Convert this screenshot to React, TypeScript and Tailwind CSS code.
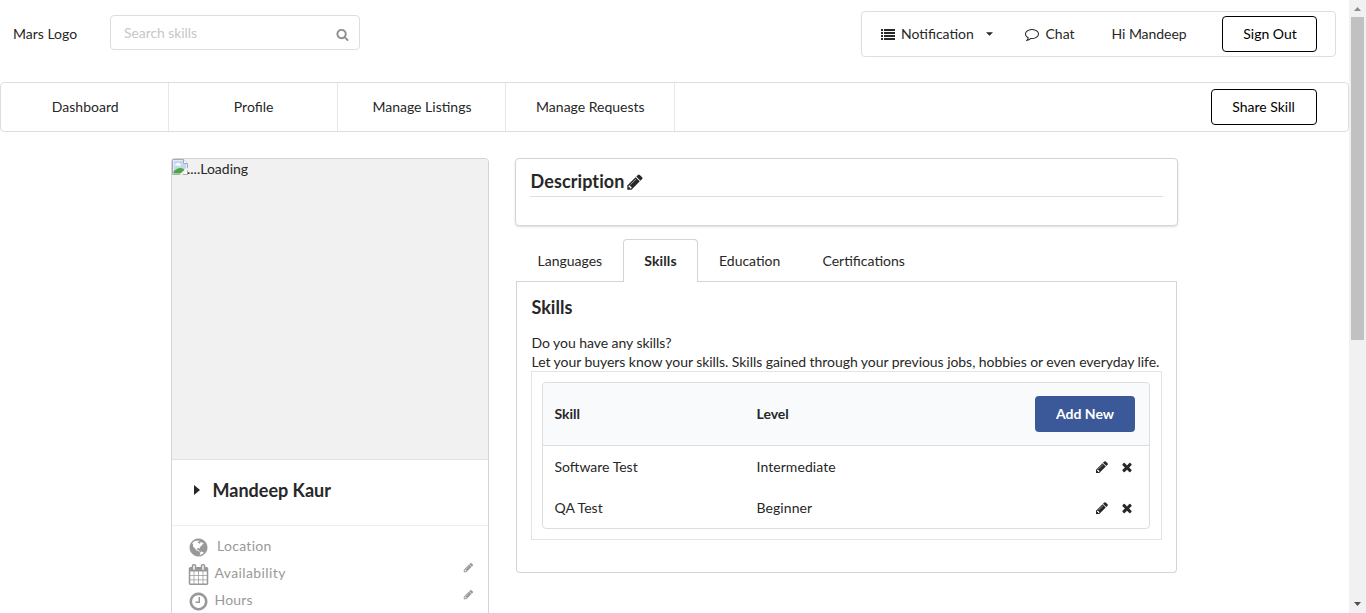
import React from "react";

const PATHS = {
  pencil:
    "M491 1536l91-91-235-235-91 91v107h128v128h107zm523-928q0-22-22-22-10 0-17 7l-542 542q-7 7-7 17 0 22 22 22 10 0 17-7l542-542q7-7 7-17zm-54-192l416 416-832 832h-416v-416zm683 96q0 53-37 90l-166 166-416-416 166-165q36-38 90-38 53 0 91 38l235 234q37 39 37 91z",
  list: "M32 256h192q32 0 32 32v192q0 32-32 32h-192q-32 0-32-32v-192q0-32 32-32zm384 0h1344q32 0 32 32v192q0 32-32 32h-1344q-32 0-32-32v-192q0-32 32-32zM32 640h192q32 0 32 32v192q0 32-32 32h-192q-32 0-32-32v-192q0-32 32-32zm384 0h1344q32 0 32 32v192q0 32-32 32h-1344q-32 0-32-32v-192q0-32 32-32zM32 1024h192q32 0 32 32v192q0 32-32 32h-192q-32 0-32-32v-192q0-32 32-32zm384 0h1344q32 0 32 32v192q0 32-32 32h-1344q-32 0-32-32v-192q0-32 32-32zM32 1408h192q32 0 32 32v192q0 32-32 32h-192q-32 0-32-32v-192q0-32 32-32zm384 0h1344q32 0 32 32v192q0 32-32 32h-1344q-32 0-32-32v-192q0-32 32-32z",
  comment:
    "M896 384q-204 0-381.5 69.5t-282 187.5-104.5 255q0 112 71.5 213.5t201.5 175.5l87 50-27 96q-24 91-70 172 152-63 275-171l43-38 57 6q69 8 130 8 204 0 381.5-69.5t282-187.5 104.5-255-104.5-255-282-187.5-381.5-69.5zm896 512q0 174-120 321.5t-326 233-450 85.5q-70 0-145-8-198 175-460 242-49 14-114 22h-5q-15 0-27-10.5t-16-27.5v-1q-3-4-.5-12t2-10 4.500-9.500l6-9 7-8.500 8-9q7-8 31-34.500t34.500-38 31-39.500 32.500-51 27-59 26-76q-157-89-247.500-220t-90.500-281q0-174 120-321.500t326-233 450-85.500 450 85.500 326 233 120 321.500z",
  search:
    "M1216 832q0-185-131.5-316.5t-316.5-131.5-316.5 131.5-131.5 316.5 131.5 316.5 316.5 131.5 316.5-131.5 131.5-316.5zm512 832q0 52-38 90t-90 38q-54 0-90-38l-343-342q-179 124-399 124-143 0-273.5-55.5t-225-150-150-225-55.5-273.5 55.5-273.5 150-225 225-150 273.5-55.5 273.5 55.5 225 150 150 225 55.5 273.5q0 220-124 399l343 343q37 37 37 90z",
  times:
    "M1490 1322q0 40-28 68l-136 136q-28 28-68 28t-68-28l-294-294-294 294q-28 28-68 28t-68-28l-136-136q-28-28-28-68t28-68l294-294-294-294q-28-28-28-68t28-68l136-136q28-28 68-28t68 28l294 294 294-294q28-28 68-28t68 28l136 136q28 28 28 68t-28 68l-294 294 294 294q28 28 28 68z",
  clock:
    "M1024 544v448q0 14-9 23t-23 9h-320q-14 0-23-9t-9-23v-64q0-14 9-23t23-9h224v-352q0-14 9-23t23-9h64q14 0 23 9t9 23zm416 352q0-148-73-273t-198-198-273-73-273 73-198 198-73 273 73 273 198 198 273 73 273-73 198-198 73-273zm224 0q0 209-103 385.5t-279.5 279.5-385.5 103-385.5-103-279.5-279.5-103-385.5 103-385.5 279.5-279.5 385.5-103 385.5 103 279.5 279.5 103 385.5z",
  calendar:
    "M192 1664h288v-288h-288v288zm352 0h320v-288h-320v288zm-352-352h288v-320h-288v320zm352 0h320v-320h-320v320zm-352-384h288v-288h-288v288zm736 736h320v-288h-320v288zm-384-736h320v-288h-320v288zm768 736h288v-288h-288v288zm-384-352h320v-320h-320v320zm-352-864v-288q0-13-9.5-22.5t-22.5-9.5h-64q-13 0-22.5 9.5t-9.5 22.5v288q0 13 9.5 22.5t22.5 9.5h64q13 0 22.5-9.5t9.5-22.5zm736 864h288v-320h-288v320zm-384-384h320v-288h-320v288zm384 0h288v-288h-288v288zm32-480v-288q0-13-9.5-22.5t-22.5-9.5h-64q-13 0-22.5 9.5t-9.5 22.5v288q0 13 9.5 22.5t22.5 9.5h64q13 0 22.5-9.5t9.5-22.5zm384-64v1280q0 52-38 90t-90 38h-1408q-52 0-90-38t-38-90v-1280q0-52 38-90t90-38h128v-96q0-66 47-113t113-47h64q66 0 113 47t47 113v96h384v-96q0-66 47-113t113-47h64q66 0 113 47t47 113v96h128q52 0 90 38t38 90z",
  globe:
    "M896 128q209 0 385.5 103t279.5 279.5 103 385.5-103 385.5-279.5 279.5-385.5 103-385.5-103-279.5-279.5-103-385.5 103-385.5 279.5-279.5 385.5-103zm274 521q-2 1-9.5 9.5t-13.5 9.5q2 0 4.5-5t5-11 3.5-7q6-7 22-15 14-6 52-12 34-8 51 11-2-2 9.5-13t14.5-12q3-2 15-4.5t15-7.5l2-22q-12 1-17.5-7t-6.5-21q0 2-6 8 0-7-4.5-8t-11.5 1-9 1q-10-3-15-7.5t-8-16.5-4-15q-2-5-9.5-11t-9.5-10q-1-2-2.5-5.5t-3-6.5-4-5.5-5.5-2.5-7 5-7.5 10-4.5 5q-3-2-6-1.5t-4.5 1-4.5 3-5 3.5q-3 2-8.5 3t-8.5 2q15-5-1-11-10-4-16-3 9-4 7.5-12t-8.5-14h5q-1-4-8.5-8.5t-17.5-8.5-13-6q-8-5-34-9.5t-33-.5q-5 6-4.5 10.5t4 14 3.5 12.5q1 6-5.5 13t-6.5 12q0 7 14 15.5t10 21.5q-3 8-16 16t-16 12q-5 8-1.5 18.5t10.5 16.5q2 2 1.5 4t-3.5 4.5-5.5 4-6.5 3.5l-3 2q-11 5-20.5-6t-13.5-26q-7-25-16-30-23-8-29 1-5-13-41-26-25-9-58-4 6-1 0-15-7-15-19-12 3-6 4-17.5t1-13.5q3-13 12-23 1-1 7-8.5t9.5-13.5.5-6q35 4 50-11 5-5 11.5-17t10.5-17q9-6 14-5.5t14.5 5.5 14.5 5q14 1 15.5-11t-7.5-20q12 1 3-17-4-7-8-9-12-4-27 5-8 4 2 8-1-1-9.5 10.5t-16.5 17.5-16-5q-1-1-5.5-13.5t-9.5-13.5q-8 0-16 15 3-8-11-15t-24-8q19-12-8-27-7-4-20.5-5t-19.5 4q-5 7-5.5 11.5t5 8 10.5 5.5 11.5 4 8.5 3q14 10 8 14-2 1-8.5 3.5t-11.5 4.5-6 4q-3 4 0 14t-2 14q-5-5-9-17.5t-7-16.5q7 9-25 6l-10-1q-4 0-16 2t-20.5 1-13.5-8q-4-8 0-20 1-4 4-2-4-3-11-9.5t-10-8.5q-46 15-94 41 6 1 12-1 5-2 13-6.5t10-5.5q34-14 42-7l5-5q14 16 20 25-7-4-30-1-20 6-22 12 7 12 5 18-4-3-11.5-10t-14.5-11-15-5q-16 0-22 1-146 80-235 222 7 7 12 8 4 1 5 9t2.5 11 11.5-3q9 8 3 19 1-1 44 27 19 17 21 21 3 11-10 18-1-2-9-9t-9-4q-3 5 .5 18.5t10.5 12.5q-7 0-9.5 16t-2.5 35.5-1 23.5l2 1q-3 12 5.5 34.5t21.5 19.5q-13 3 20 43 6 8 8 9 3 2 12 7.5t15 10 10 10.5q4 5 10 22.5t14 23.5q-2 6 9.5 20t10.5 23q-1 0-2.5 1t-2.5 1q3 7 15.5 14t15.5 13q1 3 2 10t3 11 8 2q2-20-24-62-15-25-17-29-3-5-5.5-15.5t-4.5-14.5q2 0 6 1.5t8.5 3.5 7.5 4 2 3q-3 7 2 17.5t12 18.5 17 19 12 13q6 6 14 19.5t0 13.5q9 0 20 10.5t17 19.5q5 8 8 26t5 24q2 7 8.5 13.5t12.5 9.5l16 8 13 7q5 2 18.5 10.5t21.5 11.5q10 4 16 4t14.5-2.5 13.5-3.5q15-2 29 15t21 21q36 19 55 11-2 1 .5 7.5t8 15.5 9 14.5 5.5 8.5q5 6 18 15t18 15q6-4 7-9-3 8 7 20t18 10q14-3 14-32-31 15-49-18 0-1-2.5-5.5t-4-8.5-2.5-8.5 0-7.5 5-3q9 0 10-3.5t-2-12.5-4-13q-1-8-11-20t-12-15q-5 9-16 8t-16-9q0 1-1.5 5.5t-1.5 6.5q-13 0-15-1 1-3 2.5-17.5t3.5-22.5q1-4 5.5-12t7.5-14.5 4-12.5-4.5-9.5-17.5-2.5q-19 1-26 20-1 3-3 10.5t-5 11.5-9 7q-7 3-24 2t-24-5q-13-8-22.5-29t-9.5-37q0-10 2.5-26.5t3-25-5.5-24.5q3-2 9-9.5t10-10.5q2-1 4.5-1.5t4.5 0 4-1.5 3-6q-1-1-4-3-3-3-4-3 7 3 28.5-1.5t27.5 1.5q15 11 22-2 0-1-2.5-9.5t-.5-13.5q5 27 29 9 3 3 15.5 5t17.5 5q3 2 7 5.5t5.5 4.5 5-.5 8.5-6.5q10 14 12 24 11 40 19 44 7 3 11 2t4.5-9.5 0-14-1.5-12.5l-1-8v-18l-1-8q-15-3-18.5-12t1.5-18.5 15-18.5q1-1 8-3.5t15.5-6.5 12.5-8q21-19 15-35 7 0 11-9-1 0-5-3t-7.5-5-4.5-2q9-5 2-16 5-3 7.5-11t7.5-10q9 12 21 2 8-8 1-16 5-7 20.5-10.5t18.5-9.5q7 2 8-2t1-12 3-12q4-5 15-9t13-5l17-11q3-4 0-4 18 2 31-11 10-11-6-20 3-6-3-9.5t-15-5.5q3-1 11.5-.5t10.5-1.5q15-10-7-16-17-5-43 12zm-163 877q206-36 351-189-3-3-12.5-4.5t-12.5-3.5q-18-7-24-8 1-7-2.5-13t-8-9-12.5-8-11-7q-2-2-7-6t-7-5.5-7.5-4.5-8.5-2-10 1l-3 1q-3 1-5.5 2.5t-5.5 3-4 3 0 2.5q-21-17-36-22-5-1-11-5.5t-10.5-7-10-1.5-11.5 7q-5 5-6 15t-2 13q-7-5 0-17.5t2-18.5q-3-6-10.5-4.5t-12 4.5-11.5 8.5-9 6.5-8.5 5.5-8.5 7.5q-3 4-6 12t-5 11q-2-4-11.5-6.5t-9.5-5.5q2 10 4 35t5 38q7 31-12 48-27 25-29 40-4 22 12 26 0 7-8 20.5t-7 21.5q0 6 2 16z",
};

function Icon({ name, className }: { name: keyof typeof PATHS; className: string }) {
  return (
    <svg viewBox="0 0 1792 1792" fill="currentColor" className={`shrink-0 overflow-visible ${className}`}>
      <path d={PATHS[name]} />
    </svg>
  );
}

function BrokenImage() {
  return (
    <svg viewBox="0 0 16 16" className="h-4 w-4 shrink-0">
      <path d="M.5.5h11l4 4v11H.5z" fill="#fff" stroke="#a9adb2" />
      <path d="M1.500 1.500h9.500v3.500h3.500v4l-7 5.500h-6z" fill="#c3d7f5" />
      <path d="M3 6.500q0-2 2-2 1-1.500 2.500 0 1.500 0 1.500 2z" fill="#fff" />
      <path d="M1.500 14.500v-2q4-4 7-3.500 3 0 4 2l-4 3.500z" fill="#4fa83d" />
      <path d="M11.500 .5v4h4" fill="#fff" stroke="#a9adb2" />
      <path d="M7.500 16l8.500-7v2l-6 5z" fill="#f1f1f1" />
    </svg>
  );
}

const SKILLS = [
  { name: "Software Test", level: "Intermediate" },
  { name: "QA Test", level: "Beginner" },
];

function Header() {
  return (
    <header className="flex h-[82px] items-start pr-[13px]">
      <div className="mt-6 w-[110px] pl-[13px]">Mars Logo</div>
      <div className="mt-[15px] flex h-[35px] w-[250px] items-center justify-between rounded border border-[#dedede] pl-[13px] pr-[10px]">
        <span className="tracking-[-0.08px] text-[#c7c7c7]">Search skills</span>
        <Icon name="search" className="mt-[3px] h-[13px] w-[13px] text-[#8f8f8f]" />
      </div>
      <div className="ml-auto mt-[11px] flex h-[46px] w-[475px] items-center rounded border border-[#dededf] pl-[19px]">
        <Icon name="list" className="h-[14px] w-[14px]" />
        <span className="ml-[6px] w-[85px]">Notification</span>
        <svg viewBox="0 0 8 4" className="h-1 w-[7px]" fill="currentColor">
          <path d="M0 0h8L4 4z" />
        </svg>
        <Icon name="comment" className="ml-8 h-[14px] w-[14px]" />
        <span className="ml-[6.500px] w-[66px]">Chat</span>
        <span className="w-[110.500px] tracking-[-0.05px]">Hi Mandeep</span>
        <button className="h-9 w-[95px] rounded border border-black pl-px text-black">Sign Out</button>
      </div>
    </header>
  );
}

function NavBar() {
  return (
    <nav className="flex h-[50px] items-center rounded border border-[#dededf]">
      {["Dashboard", "Profile", "Manage Listings", "Manage Requests"].map((label) => (
        <a
          key={label}
          className="flex h-full w-[168.400px] items-center justify-center border-r border-[#e7e7e7] pl-px"
        >
          {label}
        </a>
      ))}
      <button className="ml-auto mr-[31px] h-9 w-[106px] rounded border border-black text-black">
        <span className="-ml-px">Share Skill</span>
      </button>
    </nav>
  );
}

function ProfileCard() {
  return (
    <aside className="h-[520px] w-[318px] rounded border border-[#d4d4d5]">
      <div className="flex h-[300px] rounded-t bg-[#f1f1f1]">
        <BrokenImage />
        <span className="-ml-px leading-5">....Loading</span>
      </div>
      <div className="flex h-[67px] items-center border-y border-[#e1e1e1] border-b-[#eeeeee] pb-[5px] pl-[22px]">
        <svg viewBox="0 0 6 10" className="h-[10px] w-[6px]" fill="currentColor">
          <path d="M0 0l6 5-6 5z" />
        </svg>
        <span className="ml-[12.500px] text-lg font-bold">Mandeep Kaur</span>
      </div>
      <div className="pl-4 pt-[6px] text-[#999999]">
        <div className="flex h-[27px] items-center">
          <Icon name="globe" className="mt-[3px] h-[21px] w-[21px]" />
          <span className="ml-2 tracking-[0.3px]">Location</span>
        </div>
        <div className="flex h-[27px] items-center">
          <Icon name="calendar" className="mt-[3px] h-[21px] w-[21px]" />
          <span className="ml-[5.500px] tracking-[0.38px]">Availability</span>
          <Icon name="pencil" className="mb-[10px] ml-auto mr-[14px] h-[11px] w-[11px]" />
        </div>
        <div className="flex h-[27px] items-center">
          <Icon name="clock" className="mt-[3px] h-[21px] w-[21px]" />
          <span className="ml-[5.500px] tracking-[0.2px]">Hours</span>
          <Icon name="pencil" className="mb-[10px] ml-auto mr-[14px] h-[11px] w-[11px]" />
        </div>
      </div>
    </aside>
  );
}

function SkillsTable() {
  return (
    <div className="h-[147px] rounded border border-[#dededf]">
      <div className="flex h-[63px] items-center rounded-t border-b border-[#dededf] bg-[#f8fafc] pl-[11.500px] pr-[14px] font-bold">
        <span className="w-[202px]">Skill</span>
        <span>Level</span>
        <button className="ml-auto h-9 w-[100px] rounded bg-[#3b5998] font-bold text-white">Add New</button>
      </div>
      {SKILLS.map((skill) => (
        <div key={skill.name} className="flex h-[41px] items-center pl-[11.500px] pr-[15.500px] pt-[2px]">
          <span className="w-[202px]">{skill.name}</span>
          <span className="tracking-[0.07px]">{skill.level}</span>
          <Icon name="pencil" className="ml-auto h-[14px] w-[14px]" />
          <Icon name="times" className="ml-[11px] h-[14px] w-[14px]" />
        </div>
      ))}
    </div>
  );
}

function Details() {
  return (
    <section className="w-[663px]">
      <div className="h-[68px] rounded border border-[#d4d4d5] px-[14px] pt-[8px] shadow-[0_1px_2px_0_rgba(34,36,38,0.15)]">
        <h3 className="flex h-[30px] items-center border-b border-[#dededf] pb-[2px] text-lg font-bold">
          <span className="pl-[0.500px] tracking-[0.1px]">Description</span>
          <Icon name="pencil" className="ml-[1.500px] mt-[2px] h-[18px] w-[18px]" />
        </h3>
      </div>
      <div className="mt-[13px] px-px">
        <div className="flex h-[43px] items-stretch leading-[44px]">
          <span className="w-[107px] border-b border-[#d4d4d5] pl-[21.500px]">Languages</span>
          <span className="w-[75px] rounded-t border border-b-0 border-[#d4d4d5] text-center font-bold">
            <span className="block h-full leading-[42px] tracking-[0.1px]">Skills</span>
          </span>
          <span className="w-[104px] border-b border-[#d4d4d5] pl-[21px]">Education</span>
          <span className="grow border-b border-[#d4d4d5] pl-[20.500px]">Certifications</span>
        </div>
        <div className="h-[291px] rounded-b border border-t-0 border-[#d4d4d5] px-[14px] pt-[12px]">
          <h3 className="pl-[0.500px] text-lg font-bold leading-[26px]">Skills</h3>
          <p className="mt-[13px] whitespace-nowrap pl-[0.500px] leading-[19px] tracking-[-0.052px]">
            Do you have any skills?
            <br />
            Let your buyers know your skills. Skills gained through your previous jobs, hobbies or even everyday life.
          </p>
          <div className="mt-[-0.500px] h-[169px] border border-[#e4e4e5] py-[10px] pl-[10px] pr-[11px]">
            <SkillsTable />
          </div>
        </div>
      </div>
    </section>
  );
}

function ScrollBar() {
  return (
    <div className="flex w-[17px] flex-col items-center bg-[#f1f1f1]">
      <svg viewBox="0 0 17 17" className="h-[17px] w-[17px]" fill="#8b8b8b">
        <path d="M5 11l3.500-4 3.500 4z" />
      </svg>
      <div className="h-[323px] w-[13px] bg-[#c1c1c1]" />
      <svg viewBox="0 0 17 17" className="mt-auto h-[17px] w-[17px]" fill="#505050">
        <path d="M5 6l3.500 4 3.500-4z" />
      </svg>
    </div>
  );
}

export default function App() {
  return (
    <div className="flex h-[613px] w-[1366px] overflow-hidden bg-white font-['Lato',sans-serif] text-sm text-[#272727]">
      <div className="h-full w-[1349px] overflow-hidden">
        <Header />
        <NavBar />
        <main className="flex gap-[26px] pl-[171px] pt-[26px]">
          <ProfileCard />
          <Details />
        </main>
      </div>
      <ScrollBar />
    </div>
  );
}
